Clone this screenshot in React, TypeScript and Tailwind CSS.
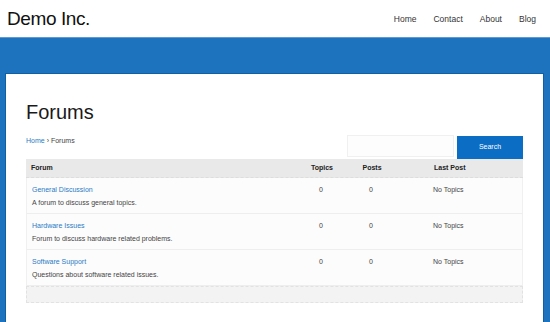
import React from 'react';

const FORUMS = [
  { name: 'General Discussion', desc: 'A forum to discuss general topics.' },
  { name: 'Hardware Issues', desc: 'Forum to discuss hardware related problems.' },
  { name: 'Software Support', desc: 'Questions about software related issues.' },
];

export default function App() {
  return (
    <div className="w-[550px] h-[322px] overflow-hidden bg-white" style={{ fontFamily: "'Liberation Sans', Arial, sans-serif" }}>
      {/* Header */}
      <header className="h-[37px] flex items-center justify-between pl-[7px] pr-[14px]">
        <div className="text-[19px] leading-none text-[#111] tracking-[-0.4px]">Demo Inc.</div>
        <nav className="flex items-center gap-[17px] text-[8.5px] text-[#333] pt-[1px]">
          <span>Home</span>
          <span>Contact</span>
          <span>About</span>
          <span>Blog</span>
        </nav>
      </header>

      {/* Blue band */}
      <div className="h-[285px] bg-[#1e73be] border-t border-[#5b9bd5] pt-[35px] pl-[5px] pr-[6px]">
        <div className="h-full bg-white border-t border-l border-r border-[#0f5ea8] px-[20px] pt-[28px]">
          <h1 className="text-[20px] leading-none text-[#1a1a1a] font-light">Forums</h1>

          <div className="flex items-end justify-between mt-[13px]">
            <div className="text-[7px] text-[#444] pb-[13px]">
              <span className="text-[#2b7bc4]">Home</span> › Forums
            </div>
            <div className="flex items-start gap-[3px]">
              <div className="w-[107px] h-[22px] border border-[#f0f0f0] bg-[#fdfdfd]" />
              <button className="w-[66px] h-[23px] bg-[#0b6ec4] text-white text-[7px] mt-[1px]">Search</button>
            </div>
          </div>

          {/* Table */}
          <div className="text-[7px] text-[#444]">
            <div className="flex h-[19px] items-center bg-[#e9e9e9] font-bold text-[#222] border-b border-dashed border-[#ddd]">
              <div className="flex-1 pl-[5px]">Forum</div>
              <div className="w-[50px] text-center">Topics</div>
              <div className="w-[50px] text-center">Posts</div>
              <div className="w-[126px] pl-[37px]">Last Post</div>
            </div>
            {FORUMS.map((f) => (
              <div key={f.name} className="flex h-[36px] bg-[#fcfcfc] border-b border-[#eeeeee] border-x border-x-[#f0f0f0] pt-[7px] text-[#444]">
                <div className="flex-1 pl-[5px]">
                  <div className="text-[#2b7bc4]">{f.name}</div>
                  <div className="mt-[2px] text-[#444]">{f.desc}</div>
                </div>
                <div className="w-[50px] text-center text-[#444]">0</div>
                <div className="w-[50px] text-center text-[#444]">0</div>
                <div className="w-[126px] pl-[37px] text-[#444]">No Topics</div>
              </div>
            ))}
            <div className="h-[17px] bg-[#f3f3f3] border border-dashed border-[#e2e2e2]" />
          </div>
        </div>
      </div>
    </div>
  );
}
